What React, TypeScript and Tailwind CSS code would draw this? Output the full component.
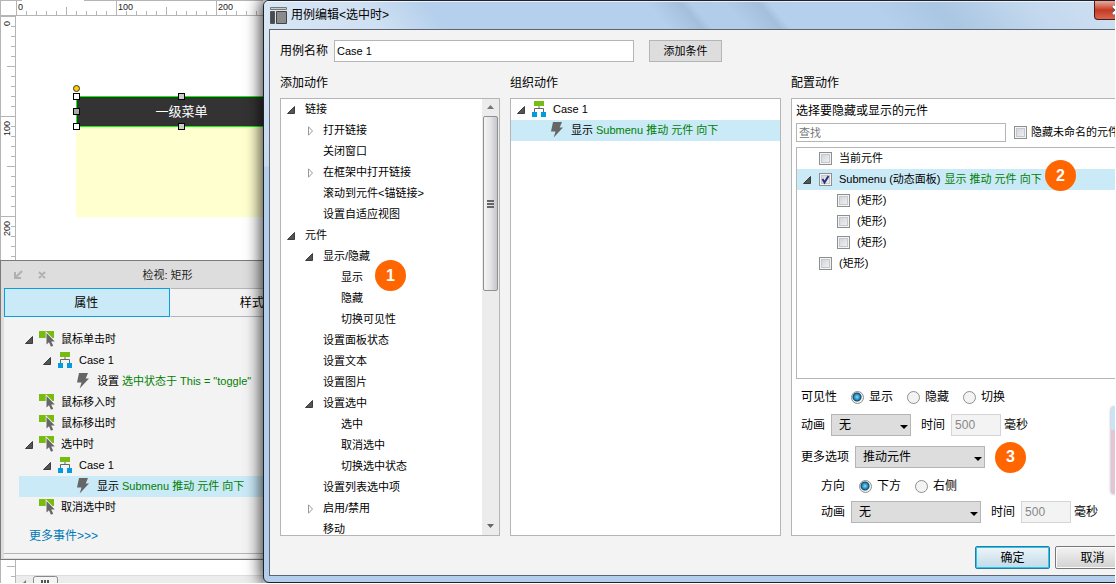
import { useState } from 'react'
import type { ReactNode } from 'react'

type IconName = 'event' | 'case' | 'bolt'

type TreeItem = {
  level: number
  text: string
  detail?: string
  open?: boolean
  closed?: boolean
  icon?: IconName
  selected?: boolean
  badge?: number
}

const events: TreeItem[] = [
  { level: 0, text: '鼠标单击时', open: true, icon: 'event' },
  { level: 1, text: 'Case 1', open: true, icon: 'case' },
  { level: 2, text: '设置', detail: '选中状态于 This = "toggle"', icon: 'bolt' },
  { level: 0, text: '鼠标移入时', icon: 'event' },
  { level: 0, text: '鼠标移出时', icon: 'event' },
  { level: 0, text: '选中时', open: true, icon: 'event' },
  { level: 1, text: 'Case 1', open: true, icon: 'case' },
  { level: 2, text: '显示', detail: 'Submenu 推动 元件 向下', icon: 'bolt', selected: true },
  { level: 0, text: '取消选中时', icon: 'event' },
]

const actions: TreeItem[] = [
  { level: 0, text: '链接', open: true },
  { level: 1, text: '打开链接', closed: true },
  { level: 1, text: '关闭窗口' },
  { level: 1, text: '在框架中打开链接', closed: true },
  { level: 1, text: '滚动到元件<锚链接>' },
  { level: 1, text: '设置自适应视图' },
  { level: 0, text: '元件', open: true },
  { level: 1, text: '显示/隐藏', open: true },
  { level: 2, text: '显示', badge: 1 },
  { level: 2, text: '隐藏' },
  { level: 2, text: '切换可见性' },
  { level: 1, text: '设置面板状态' },
  { level: 1, text: '设置文本' },
  { level: 1, text: '设置图片' },
  { level: 1, text: '设置选中', open: true },
  { level: 2, text: '选中' },
  { level: 2, text: '取消选中' },
  { level: 2, text: '切换选中状态' },
  { level: 1, text: '设置列表选中项' },
  { level: 1, text: '启用/禁用', closed: true },
  { level: 1, text: '移动' },
]

const organized: TreeItem[] = [
  { level: 0, text: 'Case 1', open: true, icon: 'case' },
  { level: 1, text: '显示', detail: 'Submenu 推动 元件 向下', icon: 'bolt', selected: true },
]

const widgets = [
  { id: 'w-current', level: 0, text: '当前元件' },
  { id: 'w-submenu', level: 0, text: 'Submenu (动态面板)', detail: '显示 推动 元件 向下', open: true, badge: 2 },
  { id: 'w-rect1', level: 1, text: '(矩形)' },
  { id: 'w-rect2', level: 1, text: '(矩形)' },
  { id: 'w-rect3', level: 1, text: '(矩形)' },
  { id: 'w-rect4', level: 0, text: '(矩形)' },
]

const indent = ['pl-[6px]', 'pl-[24px]', 'pl-[42px]']

function Icon({ name }: { name: IconName }) {
  return (
    <svg width="16" height="16" viewBox="0 0 16 16" className="shrink-0">
      {name === 'event' && (
        <>
          <path d="M0 0h15v7H0z" fill="#77bc0f" />
          <path
            d="M7.500 2v11.500l2.500-2.300 2 4.600 2.200-1-2-4.400h3.600z"
            fill="#666"
            stroke="#f3f3f3"
            strokeWidth="1.600"
            paintOrder="stroke"
          />
        </>
      )}
      {name === 'case' && (
        <>
          <path d="M3 0h10v5H3z" fill="#77bc0f" />
          <path d="M8 5v2.500M3.500 11V7.500h9V11" fill="none" stroke="#666" />
          <path d="M1 11h5v5H1zM10 11h5v5h-5z" fill="#009dde" />
        </>
      )}
      {name === 'bolt' && <path d="M4 0h9l-2.300 5.500H14L4.700 15.500 6.500 9.500H2z" fill="#666" />}
    </svg>
  )
}

function Arrow({ open, closed }: { open?: boolean; closed?: boolean }) {
  return (
    <svg width="8" height="10" viewBox="0 0 8 10" className="shrink-0">
      {open && <path d="M7.500 1.500v7H.5z" fill="#555" stroke="#222" strokeWidth=".8" />}
      {closed && <path d="M3.500.8v8.400L7.500 5z" fill="#fff" stroke="#999" />}
    </svg>
  )
}

function Badge({ n }: { n: number }) {
  return (
    <span className="flex size-[31px] shrink-0 items-center justify-center rounded-full bg-[#ff6600] text-[16px] leading-none font-bold text-white">
      {n}
    </span>
  )
}

function Tree({ items }: { items: TreeItem[] }) {
  return (
    <ul>
      {items.map((item, i) => (
        <li
          key={i}
          className={`relative flex h-[21px] items-center whitespace-nowrap ${indent[item.level]} ${item.selected ? 'bg-[#cbeaf7]' : ''}`}
        >
          <Arrow open={item.open} closed={item.closed} />
          {item.icon ? (
            <span className="mx-[6px] mb-px">
              <Icon name={item.icon} />
            </span>
          ) : (
            <span className="w-[10px]" />
          )}
          <span>{item.text}</span>
          {item.detail && <span className="ml-[3px] text-[#008000]">{item.detail}</span>}
          {item.badge && (
            <span className="absolute top-[-7px] left-[94px]">
              <Badge n={item.badge} />
            </span>
          )}
        </li>
      ))}
    </ul>
  )
}

function Check({ id, defaultChecked }: { id: string; defaultChecked?: boolean }) {
  return (
    <span className="relative size-[13px] shrink-0">
      <input
        id={id}
        type="checkbox"
        defaultChecked={defaultChecked}
        className="peer block size-[13px] appearance-none border border-[#8e8f8f] bg-linear-to-br from-[#cbcfd5] to-[#f6f6f6] shadow-[inset_0_0_0_1px_#f4f4f4,inset_0_0_0_2px_#c4c8ce]"
      />
      <svg viewBox="0 0 13 13" className="pointer-events-none absolute inset-0 hidden size-[13px] peer-checked:block">
        <path d="M3.500 6l2 3.500 4-6.500" fill="none" stroke="#2b2f7e" strokeWidth="2" />
      </svg>
    </span>
  )
}

function Radio({ name, label, defaultChecked }: { name: string; label: string; defaultChecked?: boolean }) {
  return (
    <label className="flex items-center gap-[5px]">
      <input
        type="radio"
        name={name}
        defaultChecked={defaultChecked}
        className="size-[13px] appearance-none rounded-full border border-[#8e8f8f] bg-[#f3f3f3] checked:bg-[radial-gradient(circle_at_5px_5px,#8fd8f4_0,#1c86b8_3px,#0e4266_4px,#f3f3f3_5px)]"
      />
      <span>{label}</span>
    </label>
  )
}

function Select({ id, value, className }: { id: string; value: string; className: string }) {
  return (
    <span className={`relative shrink-0 ${className}`}>
      <select
        id={id}
        className="block h-[22px] w-full appearance-none border border-[#b5b5b5] bg-[#ddd] pl-[7px] text-[12px] leading-[18px]"
      >
        <option>{value}</option>
      </select>
      <svg width="8" height="4" viewBox="0 0 8 4" className="pointer-events-none absolute right-[3px] bottom-[7px]">
        <path d="M0 0h8L4 4z" />
      </svg>
    </span>
  )
}

function Millis({ id }: { id: string }) {
  return (
    <>
      <label htmlFor={id} className="ml-[10px]">时间</label>
      <input
        id={id}
        disabled
        defaultValue="500"
        className="ml-[6px] h-[22px] w-[50px] border border-[#d5d5d5] bg-[#f3f3f3] px-[3px] text-[12px] text-[#888]"
      />
      <span className="ml-[3px]">毫秒</span>
    </>
  )
}

// ticks every 10px, longer ones every 50px, full width every 100px
const ticks = Array.from({ length: 26 }, (_, i) => i * 10)
const tickLength = (t: number) => (t % 100 === 0 ? 15 : t % 50 === 0 ? 8 : 4)

function TopRuler() {
  return (
    <svg className="block h-4 w-full shrink-0" fontSize="9" fill="#222">
      <path d="M0 .5H22M84 .5H270M.5 0V16M0 15.500H270" stroke="#b5b5b5" fill="none" />
      {ticks.map(t => (
        <path key={t} d={`M${t + 16.5} 15v-${tickLength(t)}`} stroke="#b5b5b5" />
      ))}
      <text x="18" y="10">0</text>
      <text x="118" y="10">100</text>
      <text x="218" y="10">200</text>
    </svg>
  )
}

function LeftRuler() {
  return (
    <svg className="h-full w-4 shrink-0" fontSize="9" fill="#222">
      <path d="M.5 0V260M15.500 0V260" stroke="#b5b5b5" />
      {ticks.map(t => (
        <path key={t} d={`M15 ${t + 0.5}h-${tickLength(t)}`} stroke="#b5b5b5" />
      ))}
      <text transform="translate(10 10) rotate(-90)">0</text>
      <text transform="translate(10 120) rotate(-90)">100</text>
      <text transform="translate(10 220) rotate(-90)">200</text>
    </svg>
  )
}

const handles = [
  'left-[-3px] top-[-3px] bg-white',
  'left-[102px] top-[-3px] bg-[#ccc]',
  'left-[-3px] top-[12px] bg-[#aaa]',
  'left-[-3px] top-[27px] bg-white',
  'left-[102px] top-[27px] bg-[#ccc]',
]

function Canvas() {
  return (
    <section className="flex h-[260px] shrink-0 flex-col bg-white">
      <TopRuler />
      <div className="flex min-h-0 flex-1">
        <LeftRuler />
        <div className="relative flex-1">
          <div className="absolute top-[111px] left-[60px] h-[90px] w-[210px] bg-[#ffffcf]" />
          <div className="absolute top-[80px] left-[60px] flex h-[31px] w-[211px] items-center justify-center bg-[#333] text-[13px] text-white outline-1 -outline-offset-1 outline-[#00ff00]">
            一级菜单
            {handles.map(h => (
              <span key={h} className={`absolute size-[7px] border border-black ${h}`} />
            ))}
            <span className="absolute top-[-11px] left-[-3px] size-[7px] rounded-full border border-[#333] bg-[#ffcc00]" />
          </div>
        </div>
      </div>
    </section>
  )
}

function Inspector() {
  const [tab, setTab] = useState('属性')
  return (
    <section className="flex w-[338px] flex-1 flex-col border-y border-l border-[#7a7a7a] bg-[#ddd] px-[3px] pb-px text-[11px]">
      <header className="flex h-[27px] shrink-0 items-center pt-px">
        <svg width="36" height="10" viewBox="0 0 36 10" fill="none" stroke="#b0b0b0" strokeWidth="2" className="ml-[9px]">
          <path d="M9 1L3 7M2 2v6h6M26 2l6 6M32 2l-6 6" />
        </svg>
        <h2 className="flex-1 pr-[49px] text-center text-[#222]">检视: 矩形</h2>
      </header>
      <div className="flex shrink-0 text-[12px]">
        {['属性', '样式'].map(t => (
          <button
            key={t}
            onClick={() => setTab(t)}
            className={`h-[29px] flex-1 border pr-px ${tab === t ? 'border-[#0d9ddb] bg-[#cbeaf7]' : 'border-[#b5b5b5] border-l-transparent bg-[#f3f3f3]'}`}
          >
            {t}
          </button>
        ))}
      </div>
      <div className="flex-1 bg-[#f3f3f3] pt-[12px] pl-[15px]">
        <Tree items={events} />
        <a href="#events" className="mt-[9px] ml-[10px] block text-[12px] leading-[18px] text-[#0079b8]">
          更多事件&gt;&gt;&gt;
        </a>
      </div>
      <div className="h-[5px] shrink-0 border-t border-[#b5b5b5] bg-[#f3f3f3]" />
    </section>
  )
}

function CanvasFooter() {
  return (
    <div className="flex h-[23px] shrink-0 bg-white">
      <svg width="16" height="24" className="shrink-0">
        <path d="M.5 0V24M15.500 0V24M7 6.500h8M11 16.500h4" stroke="#b5b5b5" />
      </svg>
      <div className="mt-[15px] flex flex-1 overflow-hidden border-t border-[#ddd] bg-[#ececec]">
        <svg width="16" height="12" className="ml-px">
          <path d="M9 4v8L5 8z" fill="#777" />
        </svg>
        <svg width="25" height="14">
          <rect x=".5" y=".5" width="24" height="16" rx="2" fill="#f4f4f4" stroke="#888" />
          <path d="M9 4v6M12 4v6M15 4v6" stroke="#555" strokeWidth="2" />
        </svg>
      </div>
    </div>
  )
}

function Scrollbar() {
  return (
    <div className="flex w-[17px] shrink-0 flex-col items-center bg-[#ececec] pb-[7px]">
      <svg width="7" height="4" className="mt-[6px] mb-[7px]">
        <path d="M0 4h7L3.500 0z" fill="#777" />
      </svg>
      <div className="flex h-[175px] w-[15px] flex-col items-center justify-center gap-px rounded-[2px] border border-[#909090] bg-linear-to-r from-[#f5f5f5] via-[#e4e4e6] to-[#c4c6c9]">
        <i className="h-[2px] w-[7px] bg-[#666]" />
        <i className="h-[2px] w-[7px] bg-[#666]" />
        <i className="h-[2px] w-[7px] bg-[#666]" />
      </div>
      <svg width="7" height="4" className="mt-auto">
        <path d="M0 0h7L3.500 4z" fill="#666" />
      </svg>
    </div>
  )
}

function Column({ title, className, children }: { title: string; className: string; children: ReactNode }) {
  return (
    <section className={`flex min-h-0 flex-col ${className}`}>
      <h2 className="mb-[6px] h-[18px] shrink-0 text-[12px] leading-[18px]">{title}</h2>
      <div className="flex min-h-0 flex-1 overflow-hidden border border-[#b5b5b5] bg-white">{children}</div>
    </section>
  )
}

function ConfigPanel() {
  return (
    <div className="flex flex-1 flex-col pt-[4px] pb-[12px] pl-[4px] text-[12px] whitespace-nowrap">
      <label htmlFor="search" className="h-[16px] leading-[16px]">选择要隐藏或显示的元件</label>
      <div className="mt-[4px] flex items-center text-[11px]">
        <input
          id="search"
          placeholder="查找"
          className="h-[19px] w-[210px] shrink-0 border border-[#b5b5b5] bg-white px-[2px] placeholder:text-[#777]"
        />
        <span className="mr-[4px] ml-[8px]">
          <Check id="hide-unnamed" />
        </span>
        <label htmlFor="hide-unnamed">隐藏未命名的元件</label>
      </div>
      <ul className="mt-[5px] flex-1 border border-[#b5b5b5] text-[11px]">
        {widgets.map(w => (
          <li
            key={w.id}
            className={`relative flex h-[21px] items-center ${indent[w.level]} ${w.detail ? 'bg-[#cbeaf7]' : ''}`}
          >
            <Arrow open={w.open} />
            <span className="mr-[7px] ml-[8px]">
              <Check id={w.id} defaultChecked={w.open} />
            </span>
            <label htmlFor={w.id}>{w.text}</label>
            {w.detail && <span className="ml-[4px] text-[#008000]">{w.detail}</span>}
            {w.badge && (
              <span className="absolute top-[-9px] left-[248px]">
                <Badge n={w.badge} />
              </span>
            )}
          </li>
        ))}
      </ul>
      <div className="mt-[7px] ml-[5px] flex h-[22px] items-center">
        <span className="mr-[14px]">可见性</span>
        <div className="flex gap-[14px]">
          <Radio name="visibility" label="显示" defaultChecked />
          <Radio name="visibility" label="隐藏" />
          <Radio name="visibility" label="切换" />
        </div>
      </div>
      <div className="mt-[6px] ml-[5px] flex h-[22px] items-center">
        <label htmlFor="anim" className="mr-[6px]">动画</label>
        <Select id="anim" value="无" className="w-[80px]" />
        <Millis id="anim-ms" />
      </div>
      <div className="mt-[10px] ml-[5px] flex h-[22px] items-center">
        <label htmlFor="more" className="mr-[6px]">更多选项</label>
        <Select id="more" value="推动元件" className="mr-[10px] w-[130px]" />
        <Badge n={3} />
      </div>
      <div className="mt-[7px] ml-[25px] flex h-[22px] items-center">
        <span className="mr-[14px]">方向</span>
        <div className="flex gap-[14px]">
          <Radio name="direction" label="下方" defaultChecked />
          <Radio name="direction" label="右侧" />
        </div>
      </div>
      <div className="mt-[4px] ml-[25px] flex h-[22px] items-center">
        <label htmlFor="push-anim" className="mr-[6px]">动画</label>
        <Select id="push-anim" value="无" className="w-[130px]" />
        <Millis id="push-ms" />
      </div>
    </div>
  )
}

function CaseDialog() {
  return (
    <main className="relative z-10 mr-[-32px] flex min-w-0 flex-1 flex-col rounded-[6px] border border-[#1e222c] bg-[#b6d1ed] bg-[linear-gradient(#dce9f6,#c5d9ee_165px,#b4cfec_166px)] px-[5px] pb-[6px] shadow-[0_0_16px_2px_rgba(0,0,0,0.8)]">
      <div className="absolute inset-x-0 top-0 h-[28px] rounded-t-[5px] border-t border-white/70 bg-[linear-gradient(50deg,#d9e7f5_0,#cfe0f2_90px,#b5d0ec_140px,#b5d0ec_310px,#a3bfdb_336px,#b2cdea_344px,#b2cdea_370px,#a3bfdb_396px,#b5d0ec_404px,#b5d0ec_480px,#a9c6e2_530px,#c3d8ee_600px,#d3e3f3_100%)]" />
      <header className="relative flex h-[28px] shrink-0 items-center">
        <svg width="17" height="17" viewBox="0 0 17 17" className="mt-px ml-px">
          <path d="M.5.5h16v2H.5z" fill="#c8cacc" stroke="#777" />
          <path d="M.5 4.500h4v12h-4z" fill="#4a4a4a" stroke="#555" />
          <path d="M6.500 4.500h10v12h-10z" fill="#8b8b8b" stroke="#444" />
        </svg>
        <h1 className="ml-[4px] text-[12px]">用例编辑&lt;选中时&gt;</h1>
        <button
          aria-label="关闭"
          className="mb-auto ml-auto flex h-[19px] w-[47px] items-center justify-center rounded-b-[4px] border border-t-0 border-[#4a1a18] bg-linear-to-b from-[#e9a99c] via-[#c3391f] to-[#d8674f]"
        >
          <svg width="13" height="10" viewBox="0 0 13 10">
            <path d="M2 1l9 8M11 1L2 9" stroke="#434a5c" strokeWidth="4" />
            <path d="M2 1l9 8M11 1L2 9" stroke="#fff" strokeWidth="2.500" />
          </svg>
        </button>
      </header>
      <div className="relative flex min-h-0 flex-1 flex-col border border-[#5d6570] bg-[#f3f3f3] px-[10px] pt-[10px] pb-[6px]">
        <div className="flex shrink-0 items-center text-[12px]">
          <label htmlFor="case-name">用例名称</label>
          <input
            id="case-name"
            defaultValue="Case 1"
            className="ml-[6px] h-[22px] w-[300px] border border-[#b5b5b5] bg-white px-[2px] text-[11px]"
          />
          <button className="ml-[15px] h-[22px] w-[73px] border border-[#b5b5b5] bg-[#ddd] text-[11px]">添加条件</button>
        </div>
        <div className="mt-[12px] flex min-h-0 flex-1 gap-[10px]">
          <Column title="添加动作" className="w-[220px] shrink-0">
            <div className="flex-1">
              <Tree items={actions} />
            </div>
            <Scrollbar />
          </Column>
          <Column title="组织动作" className="w-[271px] shrink-0">
            <div className="flex-1">
              <Tree items={organized} />
            </div>
          </Column>
          <Column title="配置动作" className="min-w-0 flex-1">
            <ConfigPanel />
          </Column>
        </div>
        <footer className="mt-[10px] flex shrink-0 justify-end gap-[5px] text-[12px]">
          <button className="h-[23px] w-[75px] rounded-[2px] border border-[#2c7a9c] bg-linear-to-b from-[#edf5f9] to-[#c2dbe8] shadow-[inset_0_0_0_1px_#24c8f5]">
            确定
          </button>
          <button className="h-[23px] w-[75px] rounded-[2px] border border-[#777] bg-linear-to-b from-[#f3f3f3] to-[#d2d2d2] shadow-[inset_0_0_0_1px_#fbfbfb]">
            取消
          </button>
        </footer>
      </div>
    </main>
  )
}

export default function App() {
  return (
    <div className="flex h-screen bg-white pr-px pb-px font-['Liberation_Sans','Noto_Sans_CJK_SC',sans-serif] text-[11px] text-black">
      <div className="relative flex min-w-0 flex-1 overflow-hidden">
        <div className="flex w-[263px] shrink-0 flex-col overflow-hidden">
          <Canvas />
          <Inspector />
          <CanvasFooter />
        </div>
        <CaseDialog />
        <div className="absolute top-[406px] right-0 z-20 h-[87px] w-[4px] rounded-l-[3px] border-t-[24px] border-[#c8e4f5] bg-[#e5c5d3] shadow-[0_1px_3px_rgba(0,0,0,0.4)]" />
      </div>
    </div>
  )
}
